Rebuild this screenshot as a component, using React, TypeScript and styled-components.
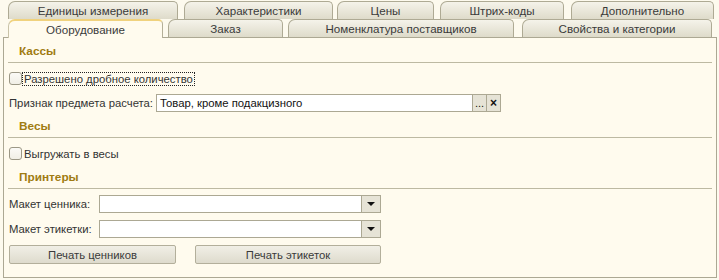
import styled, { createGlobalStyle } from "styled-components";

const GlobalStyle = createGlobalStyle`
  html, body {
    margin: 0;
    padding: 0;
    background: #fdfaee;
    font-family: "Liberation Sans", Arial, sans-serif;
    font-size: 11.3px;
    color: #333;
  }
`;

const Form = styled.div`
  width: 719px;
  height: 280px;
  padding-top: 1px;
  box-sizing: border-box;
`;

const TabRow = styled.div`
  display: flex;
  height: 18px;
  padding-left: 8px;
  position: relative;
`;

const Tab = styled.div<{ $width: number; $gap?: number; $active?: boolean }>`
  width: ${(p) => p.$width}px;
  margin-left: ${(p) => p.$gap ?? 0}px;
  box-sizing: border-box;
  display: flex;
  align-items: center;
  justify-content: center;
  border: 1px solid #aeaa94;
  border-bottom: none;
  border-radius: 7px 5px 0 0;
  background: linear-gradient(#f5f3ea, #dedbca);
  color: #3a3a3a;
  white-space: nowrap;
  line-height: 14px;
  font-size: 11.6px;

  ${(p) =>
    p.$active &&
    `
    height: 19px;
    background: #fffbee;
    border-top: 2px solid #f0d27e;
    border-left-color: #c9c3a8;
    border-right-color: #b4af98;
    position: relative;
    z-index: 2;
  `}
`;

const Panel = styled.div`
  margin-left: 3px;
  width: 714px;
  height: 241px;
  box-sizing: border-box;
  border: 1px solid #aca893;
  background: #fffbee;
`;

const Header = styled.div<{ $top: number }>`
  margin: ${(p) => p.$top}px 4px 0;
  height: 19px;
  box-sizing: border-box;
  display: flex;
  align-items: flex-end;
  padding: 0 0 4px 11px;
  border-bottom: 1px solid #bdb9a2;
  font-weight: bold;
  font-size: 11.8px;
  line-height: 14px;
  color: #a07b12;
`;

const CheckRow = styled.label<{ $top: number }>`
  display: flex;
  align-items: center;
  height: 13px;
  margin: ${(p) => p.$top}px 0 0 5px;
  gap: 1px;
`;

const Box = styled.span`
  width: 13px;
  height: 13px;
  box-sizing: border-box;
  border: 1px solid #9c9886;
  border-radius: 3px;
  background: linear-gradient(#fbfaf6, #f1efe6);
`;

const CheckText = styled.span<{ $focused?: boolean }>`
  line-height: 12px;
  padding: 0 1px;
  outline: ${(p) => (p.$focused ? "1px dotted #222" : "none")};
`;

const FieldRow = styled.div<{ $top: number; $label: number }>`
  display: grid;
  grid-template-columns: ${(p) => p.$label}px auto;
  align-items: center;
  margin: ${(p) => p.$top}px 0 0 5px;
  height: 18px;
`;

const Label = styled.span`
  white-space: nowrap;
  line-height: 14px;
`;

const Field = styled.div<{ $width: number }>`
  display: flex;
  width: ${(p) => p.$width}px;
  height: 18px;
`;

const Input = styled.div`
  flex: 1;
  box-sizing: border-box;
  border: 1px solid #aca893;
  background: #fff;
  padding: 0 3px;
  line-height: 16px;
  color: #111;
`;

const SmallButton = styled.div<{ $width: number }>`
  width: ${(p) => p.$width}px;
  box-sizing: border-box;
  border: 1px solid #aca893;
  border-left: none;
  background: #e6e3d6;
  display: flex;
  align-items: center;
  justify-content: center;
  color: #111;
  font-size: 11px;
`;

const Cross = styled.span`
  font-weight: bold;
  font-size: 12px;
  line-height: 12px;
`;

const Arrow = styled.span`
  width: 0;
  height: 0;
  border-left: 4px solid transparent;
  border-right: 4px solid transparent;
  border-top: 4px solid #111;
`;

const ButtonRow = styled.div`
  display: flex;
  margin: 7px 0 0 5px;
  gap: 19px;
`;

const Button = styled.div<{ $width: number }>`
  width: ${(p) => p.$width}px;
  height: 19px;
  box-sizing: border-box;
  border: 1px solid #b3af9b;
  border-radius: 2px;
  background: linear-gradient(#f1efe6, #dedbcd);
  display: flex;
  align-items: center;
  justify-content: center;
  color: #3a3a3a;
`;

export default function App() {
  return (
    <Form>
      <GlobalStyle />
      <TabRow>
        <Tab $width={170}>Единицы измерения</Tab>
        <Tab $width={149} $gap={6}>Характеристики</Tab>
        <Tab $width={97} $gap={4}>Цены</Tab>
        <Tab $width={124} $gap={6}>Штрих-коды</Tab>
        <Tab $width={143} $gap={7}>Дополнительно</Tab>
      </TabRow>
      <TabRow>
        <Tab $width={155} $active>Оборудование</Tab>
        <Tab $width={115} $gap={5}>Заказ</Tab>
        <Tab $width={226} $gap={5}>Номенклатура поставщиков</Tab>
        <Tab $width={190} $gap={8}>Свойства и категории</Tab>
      </TabRow>
      <Panel>
        <Header $top={6}>Кассы</Header>
        <CheckRow $top={9}>
          <Box />
          <CheckText $focused>Разрешено дробное количество</CheckText>
        </CheckRow>
        <FieldRow $top={9} $label={147}>
          <Label>Признак предмета расчета:</Label>
          <Field $width={345}>
            <Input>Товар, кроме подакцизного</Input>
            <SmallButton $width={14}>...</SmallButton>
            <SmallButton $width={14}>
              <Cross>×</Cross>
            </SmallButton>
          </Field>
        </FieldRow>
        <Header $top={7}>Весы</Header>
        <CheckRow $top={9}>
          <Box />
          <CheckText>Выгружать в весы</CheckText>
        </CheckRow>
        <Header $top={10}>Принтеры</Header>
        <FieldRow $top={6} $label={90}>
          <Label>Макет ценника:</Label>
          <Field $width={282}>
            <Input />
            <SmallButton $width={19}>
              <Arrow />
            </SmallButton>
          </Field>
        </FieldRow>
        <FieldRow $top={7} $label={90}>
          <Label>Макет этикетки:</Label>
          <Field $width={282}>
            <Input />
            <SmallButton $width={19}>
              <Arrow />
            </SmallButton>
          </Field>
        </FieldRow>
        <ButtonRow>
          <Button $width={167}>Печать ценников</Button>
          <Button $width={186}>Печать этикеток</Button>
        </ButtonRow>
      </Panel>
    </Form>
  );
}
